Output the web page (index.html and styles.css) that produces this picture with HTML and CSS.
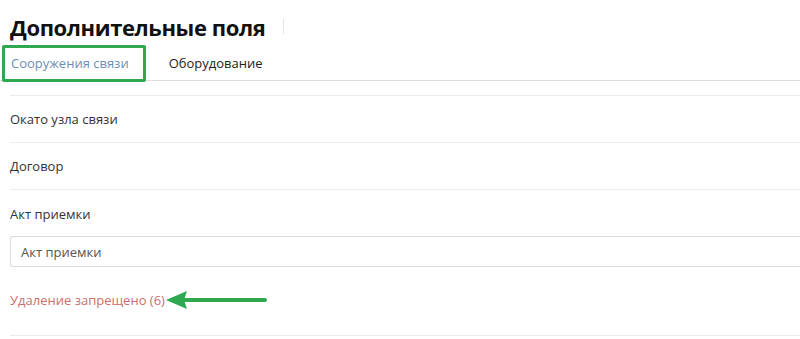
FILE: index.html
```html
<!doctype html>
<html lang="ru">
<head>
  <meta charset="utf-8">
  <title>Дополнительные поля</title>
  <link rel="stylesheet" href="styles.css">
</head>
<body>
<div class="page">
  <div class="page-header">
    <h1>Дополнительные поля</h1>
    <span class="header-divider"></span>
  </div>

  <div class="tabs">
    <div class="tab active">Сооружения связи</div>
    <div class="tab">Оборудование</div>
  </div>

  <div class="fields">
    <div class="field">Окато узла связи</div>
    <div class="field">Договор</div>
    <div class="field field-input">
      <label for="act">Акт приемки</label>
      <input id="act" type="text" placeholder="Акт приемки">
    </div>
    <div class="status">
      <span class="status-text">Удаление запрещено (6)</span>
      <svg class="pointer" width="102" height="22" viewBox="0 0 102 22">
        <line x1="18" y1="11" x2="100" y2="11" stroke="#2fa84f" stroke-width="4" stroke-linecap="round"/>
        <polygon points="1,11 22,2 19,11 22,20" fill="#2fa84f"/>
      </svg>
    </div>
  </div>
</div>
</body>
</html>
```

FILE: styles.css
```css
body {
  margin: 0;
  font-family: "Open Sans", "Noto Sans", Arial, sans-serif;
  background-color: #fff;
  color: #333;
}

.page {
  padding-top: 8px;
}

.page-header {
  display: flex;
  align-items: center;
  height: 37px;
  padding-left: 10px;
}

.page-header h1 {
  margin: 0;
  font-size: 22px;
  font-weight: 700;
  color: #111;
  letter-spacing: -0.4px;
}

.header-divider {
  width: 1px;
  height: 15px;
  margin-left: 18px;
  background-color: #e3e3e3;
}

.tabs {
  display: flex;
  height: 35px;
  border-bottom: 1px solid #dedede;
}

.tab {
  display: flex;
  align-items: center;
  padding: 0 10px 0 11px;
  font-size: 13px;
  color: #222;
}

.tab + .tab {
  padding-left: 23px;
}

.tab.active {
  position: relative;
  color: #6b8fb5;
  padding-right: 17px;
}

.tab.active::after {
  content: "";
  position: absolute;
  left: 2px;
  right: 0;
  top: 0;
  bottom: -2px;
  border: 3px solid #2fa84f;
  border-radius: 2px;
}

.fields {
  margin-top: 14px;
  margin-left: 10px;
}

.field {
  display: flex;
  align-items: center;
  height: 46px;
  border-top: 1px solid #ececec;
  font-size: 13px;
  color: #333;
}

.field-input {
  display: block;
  height: auto;
  padding-top: 15px;
}

.field-input label {
  display: block;
  font-size: 13px;
  line-height: 18px;
}

.field-input input {
  display: block;
  box-sizing: border-box;
  width: 100%;
  height: 31px;
  margin-top: 13px;
  padding: 0 10px;
  border: 1px solid #dcdcdc;
  border-right: none;
  border-radius: 3px 0 0 3px;
  font-family: inherit;
  font-size: 13px;
  color: #555;
}

.field-input input::placeholder {
  color: #555;
}

.status {
  display: flex;
  align-items: center;
  height: 66px;
  padding-bottom: 2px;
  border-bottom: 1px solid #ececec;
}

.status-text {
  font-size: 13px;
  color: #c9706f;
}

.pointer {
  display: block;
}
```
